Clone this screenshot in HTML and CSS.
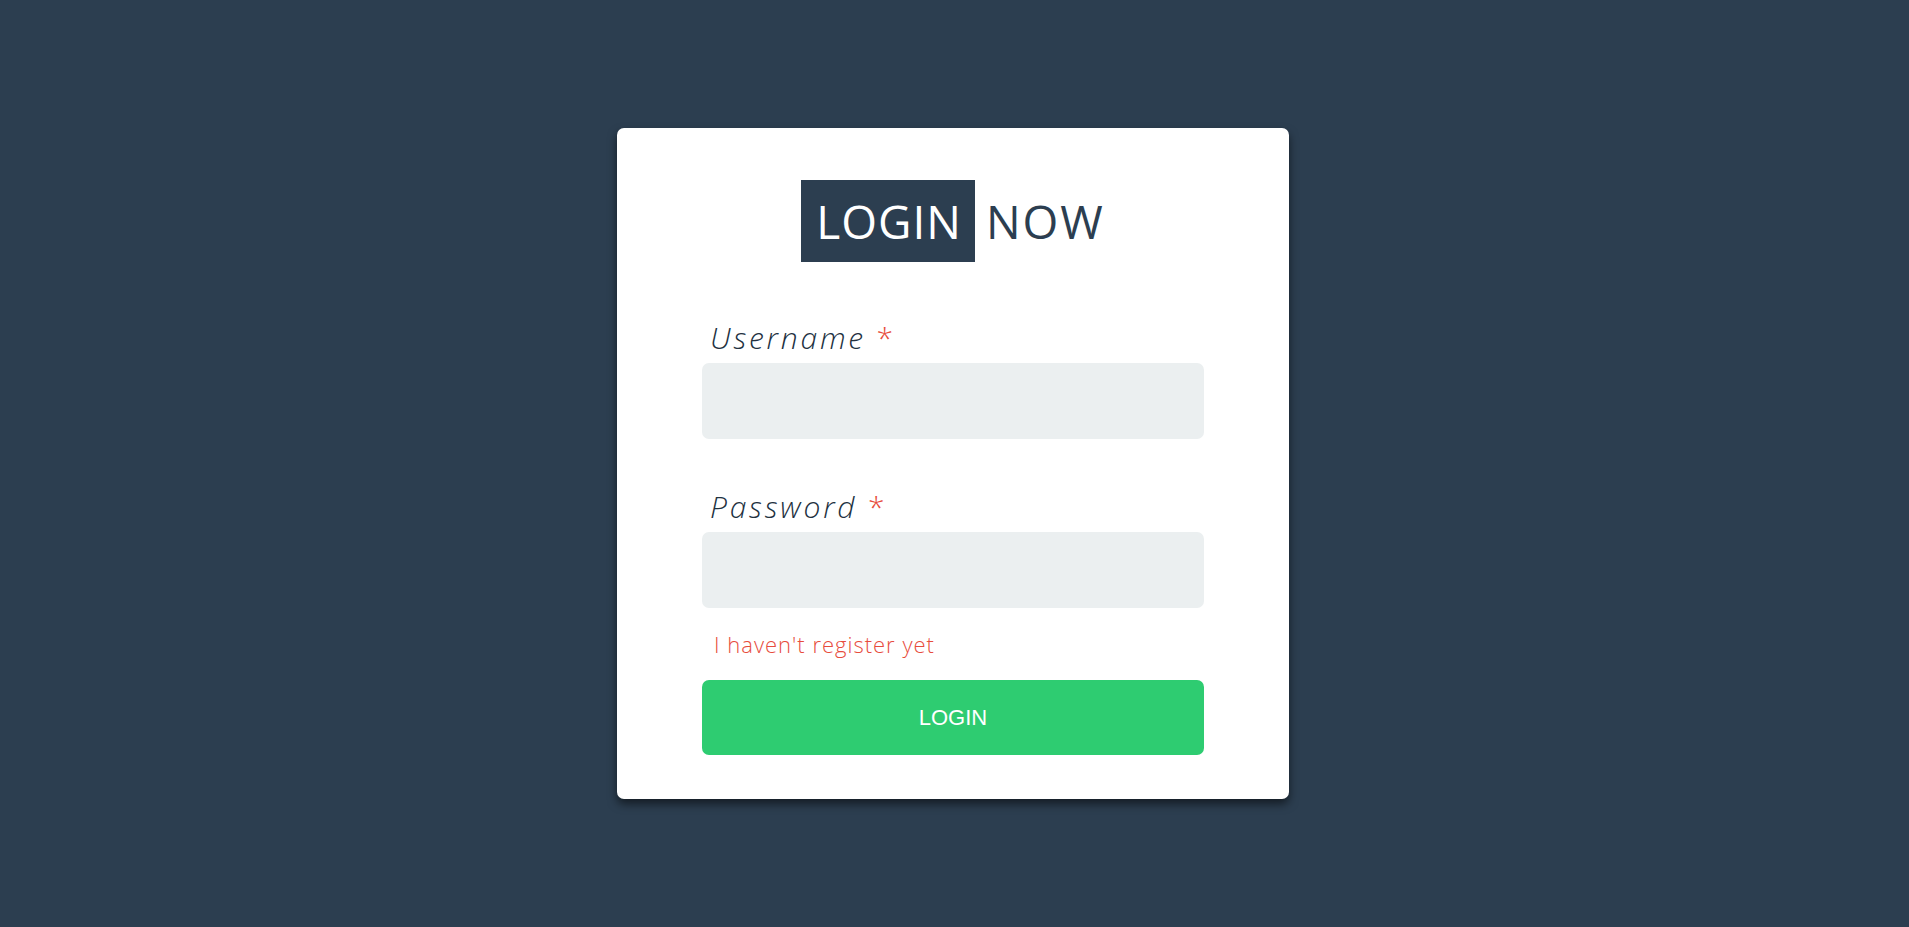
FILE: index.html
```html
<!DOCTYPE html>
<html lang="en">
<head>
<meta charset="utf-8">
<title>Login Now</title>
<link rel="stylesheet" href="styles.css">
</head>
<body>
<main class="page">
  <section class="card">
    <h1 class="title"><span class="title-box">LOGIN</span><span class="title-rest">NOW</span></h1>
    <form class="form">
      <label class="label" for="username">Username <span class="req">*</span></label>
      <input class="field" id="username" type="text">
      <label class="label label-second" for="password">Password <span class="req">*</span></label>
      <input class="field" id="password" type="password">
      <a class="register" href="#">I haven't register yet</a>
      <button class="btn" type="button">LOGIN</button>
    </form>
  </section>
</main>
</body>
</html>
```

FILE: styles.css
```css
html, body {
  margin: 0;
  padding: 0;
}
body {
  background: #2c3e50;
  height: 927px;
  overflow: hidden;
  font-family: "Open Sans", "Liberation Sans", sans-serif;
}
.page {
  display: flex;
  justify-content: center;
  padding-top: 128px;
  padding-right: 3px;
}
.card {
  width: 672px;
  box-sizing: border-box;
  background: #ffffff;
  border-radius: 7px;
  box-shadow: 0 5px 10px rgba(0, 0, 0, 0.55);
  padding: 52px 0 44px;
  display: flex;
  flex-direction: column;
  align-items: center;
}
.title {
  margin: 0;
  display: flex;
  align-items: center;
  gap: 11px;
  font-weight: 400;
  font-size: 46px;
  letter-spacing: 1px;
  color: #2c3e50;
}
.title-box {
  background: #2c3e50;
  color: #ffffff;
  height: 82px;
  line-height: 82px;
  padding: 0 13px 0 15px;
}
.title-rest {
  line-height: 82px;
  letter-spacing: 2px;
}
.form {
  width: 502px;
  display: flex;
  flex-direction: column;
  margin-top: 56px;
}
.label {
  font-style: italic;
  font-weight: 300;
  font-size: 30px;
  line-height: 40px;
  letter-spacing: 2.8px;
  color: #22313f;
  padding-left: 8px;
  margin-bottom: 5px;
}
.label-second {
  margin-top: 48px;
}
.req {
  color: #e74c3c;
  font-style: normal;
  font-weight: 300;
}
.field {
  height: 76px;
  border: none;
  border-radius: 7px;
  background: #ebeff0;
  box-sizing: border-box;
  outline: none;
  font-size: 20px;
  padding: 0 16px;
}
.register {
  margin-top: 21px;
  padding-left: 12px;
  font-size: 22px;
  line-height: 30px;
  font-weight: 300;
  letter-spacing: 1px;
  color: #e74c3c;
  text-decoration: none;
}
.btn {
  margin-top: 21px;
  height: 75px;
  border: none;
  border-radius: 7px;
  background: #2ecc71;
  color: #ffffff;
  font-family: "Liberation Sans", Arial, sans-serif;
  font-size: 22px;
  cursor: pointer;
}
```
